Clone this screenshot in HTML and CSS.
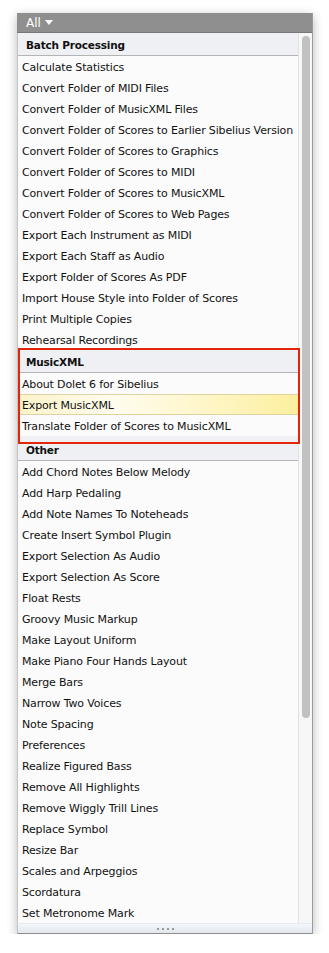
FILE: index.html
```html
<!DOCTYPE html>
<html lang="en">
<head>
  <meta charset="UTF-8" />
  <title>Plug-ins</title>
  <link rel="stylesheet" href="styles.css">
</head>
<body>
  <div class="panel">
    <div class="toolbar">
      <span class="filter">All</span>
      <span class="caret"></span>
    </div>
    <div class="content">
      <div class="list">
        <div class="group">
          <div class="group-title">Batch Processing</div>
          <div class="item">Calculate Statistics</div>
          <div class="item">Convert Folder of MIDI Files</div>
          <div class="item">Convert Folder of MusicXML Files</div>
          <div class="item">Convert Folder of Scores to Earlier Sibelius Version</div>
          <div class="item">Convert Folder of Scores to Graphics</div>
          <div class="item">Convert Folder of Scores to MIDI</div>
          <div class="item">Convert Folder of Scores to MusicXML</div>
          <div class="item">Convert Folder of Scores to Web Pages</div>
          <div class="item">Export Each Instrument as MIDI</div>
          <div class="item">Export Each Staff as Audio</div>
          <div class="item">Export Folder of Scores As PDF</div>
          <div class="item">Import House Style into Folder of Scores</div>
          <div class="item">Print Multiple Copies</div>
          <div class="item">Rehearsal Recordings</div>
        </div>
        <div class="group marked">
          <div class="group-title">MusicXML</div>
          <div class="item">About Dolet 6 for Sibelius</div>
          <div class="item selected">Export MusicXML</div>
          <div class="item">Translate Folder of Scores to MusicXML</div>
        </div>
        <div class="group">
          <div class="group-title">Other</div>
          <div class="item">Add Chord Notes Below Melody</div>
          <div class="item">Add Harp Pedaling</div>
          <div class="item">Add Note Names To Noteheads</div>
          <div class="item">Create Insert Symbol Plugin</div>
          <div class="item">Export Selection As Audio</div>
          <div class="item">Export Selection As Score</div>
          <div class="item">Float Rests</div>
          <div class="item">Groovy Music Markup</div>
          <div class="item">Make Layout Uniform</div>
          <div class="item">Make Piano Four Hands Layout</div>
          <div class="item">Merge Bars</div>
          <div class="item">Narrow Two Voices</div>
          <div class="item">Note Spacing</div>
          <div class="item">Preferences</div>
          <div class="item">Realize Figured Bass</div>
          <div class="item">Remove All Highlights</div>
          <div class="item">Remove Wiggly Trill Lines</div>
          <div class="item">Replace Symbol</div>
          <div class="item">Resize Bar</div>
          <div class="item">Scales and Arpeggios</div>
          <div class="item">Scordatura</div>
          <div class="item">Set Metronome Mark</div>
        </div>
      </div>
      <div class="scrollbar">
        <div class="thumb"></div>
      </div>
    </div>
    <div class="footer">
      <span class="dot"></span><span class="dot"></span><span class="dot"></span><span class="dot"></span>
    </div>
  </div>
</body>
</html>
```

FILE: styles.css
```css
body {
  margin: 0;
  background: #ffffff;
  font-family: "DejaVu Sans", Verdana, sans-serif;
  color: #111111;
}

.panel {
  margin: 13px 0 0 17px;
  width: 295px;
  background: #fafafa;
  border-right: 1px solid #9c9c9c;
  box-shadow: 0 3px 10px rgba(0, 0, 0, 0.28);
}

/* Filter bar */
.toolbar {
  height: 19px;
  background: #8f8f8f;
  border-bottom: 1px solid #777777;
  display: flex;
  align-items: center;
  gap: 4px;
  padding-left: 9px;
  color: #ffffff;
  font-size: 12px;
}

.caret {
  width: 0;
  height: 0;
  border-left: 4px solid transparent;
  border-right: 4px solid transparent;
  border-top: 5px solid #ffffff;
}

.content {
  display: flex;
  height: 890px;
  overflow: hidden;
}

.list {
  flex: 1;
  border-left: 1px solid #c4c4c4;
  background: #fbfbfb;
}

.group-title {
  height: 22px;
  line-height: 24px;
  padding-left: 8px;
  background: #eff0f4;
  border-bottom: 1px solid #b4b4b4;
  font-size: 10.5px;
  letter-spacing: -0.2px;
  font-weight: bold;
}

.item {
  height: 21px;
  line-height: 23px;
  padding-left: 4px;
  font-size: 11px;
  letter-spacing: -0.15px;
  white-space: nowrap;
  overflow: hidden;
  background: #fbfbfb;
}

.item.selected {
  height: 19px;
  line-height: 21px;
  border-top: 1px solid #ddd3a2;
  border-bottom: 1px solid #ddd3a2;
  background: linear-gradient(90deg, #fcf3c9, #fffcee 35%, #fdf2b2 85%, #fcef9e);
}

/* Annotated group */
.group.marked {
  position: relative;
  padding-bottom: 2px;
  background: #f1f1f4;
}

.group.marked::after {
  content: "";
  position: absolute;
  top: -2px;
  left: 0;
  right: -2px;
  bottom: -6px;
  border: 2px solid #e2250b;
}

.scrollbar {
  width: 14px;
  border-left: 1px solid #e1e1e1;
  background: #f7f7f7;
  padding: 3px 3px 0 3px;
  box-sizing: border-box;
}

.thumb {
  width: 8px;
  height: 682px;
  border-radius: 4px;
  background: #c1c1c1;
}

.footer {
  height: 9px;
  border-bottom: 1px solid #8d8d8d;
  border-left: 1px solid #c4c4c4;
  border-top: 1px solid #e6e9ee;
  background: linear-gradient(#f4f7fa, #e2e7ed);
  display: flex;
  justify-content: center;
  align-items: center;
  gap: 3px;
}

.dot {
  width: 2px;
  height: 2px;
  background: #9a9a9a;
}
```
